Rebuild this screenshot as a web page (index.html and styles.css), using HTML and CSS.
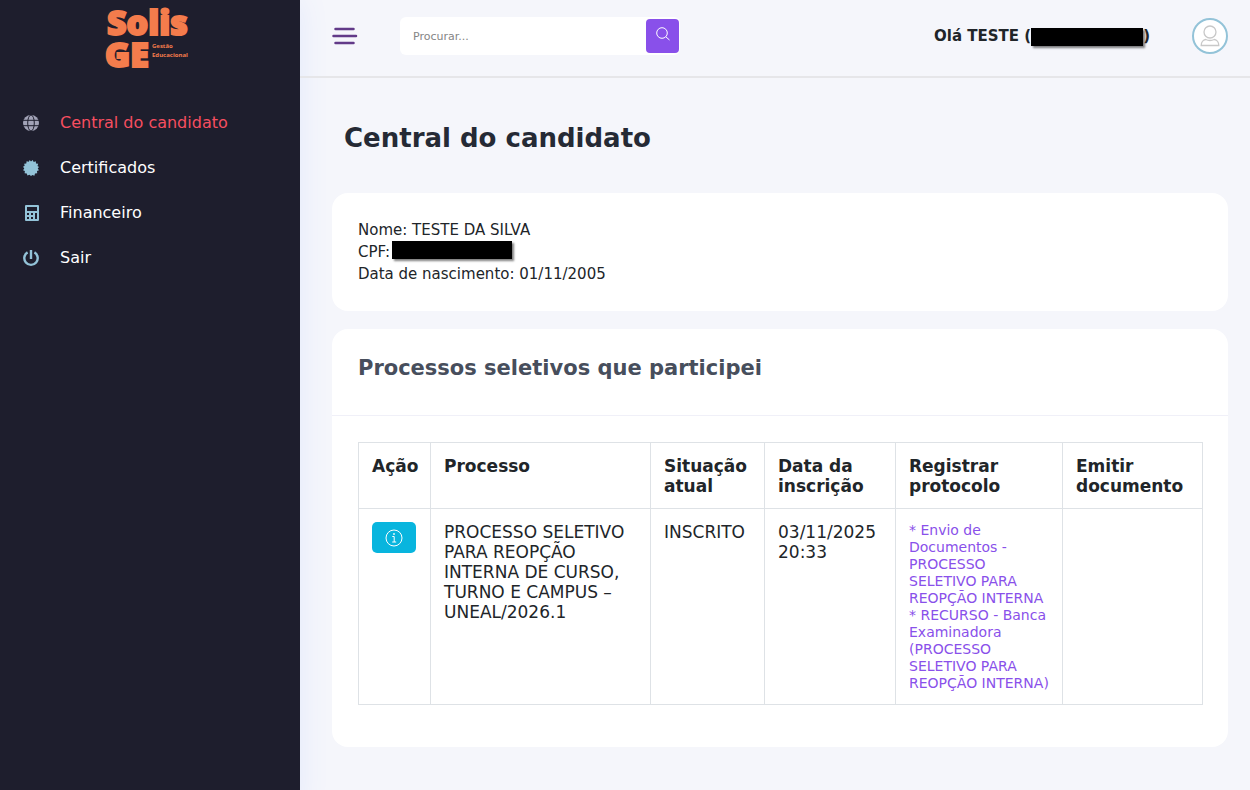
FILE: index.html
```
<!DOCTYPE html>
<html lang="pt-BR">

<head>
    <meta charset="UTF-8">
    <meta name="viewport" content="width=device-width, initial-scale=1.0">
    <title>Central do candidato - Solis GE</title>
    <link rel="stylesheet" href="styles.css">
</head>

<body>
<div class="wrapper">
    <!-- Sidebar -->
    <aside class="sidebar">
        <a href="#" class="logo">
            <svg width="90" height="64" viewBox="0 0 90 64" role="img" aria-label="Solis GE">
                <text class="logo-big" x="2" y="29">Solis</text>
                <text class="logo-big" x="0" y="61">GE</text>
                <text class="logo-small" x="47" y="42">Gestão</text>
                <text class="logo-small" x="47" y="51">Educacional</text>
            </svg>
        </a>

        <nav class="menu">
            <a href="#" class="menu-link active">
                <svg class="menu-icon" viewBox="0 0 16 16">
                    <circle cx="8" cy="8" r="8" fill="currentColor"/>
                    <g fill="none" stroke="#1e1e2d">
                        <ellipse cx="8" cy="8" rx="3.3" ry="8"/>
                        <path d="M0 5.3h16M0 10.7h16"/>
                    </g>
                </svg>
                <span>Central do candidato</span>
            </a>
            <a href="#" class="menu-link">
                <svg class="menu-icon" viewBox="0 0 16 16">
                    <path fill="currentColor" d="M8 1.5 9.7 0l1 2 2.1-.8.2 2.3 2.2.3-.7 2.1L16 7l-1.3 1.5L16 10.3l-2 .8.2 2.2-2.2.2-.6 2.2-2-.8L8 16l-1.5-1.2-2.1.8-.6-2.2-2.2-.2.3-2.2L0 10.2l1.3-1.7L0 6.8l1.7-1-.6-2.1 2.2-.3.3-2.2 2.2.6L6.7 0z"/>
                </svg>
                <span>Certificados</span>
            </a>
            <a href="#" class="menu-link">
                <svg class="menu-icon calc" viewBox="0 0 14 16">
                    <path fill="currentColor" fill-rule="evenodd" d="M1 0h12a1 1 0 0 1 1 1v14a1 1 0 0 1-1 1H1a1 1 0 0 1-1-1V1a1 1 0 0 1 1-1zM2 2v4h10V2zM2 8v2h2V8zM6 8v2h2V8zM10 8v6h2V8zM2 12v2h2v-2zM6 12v2h2v-2z"/>
                </svg>
                <span>Financeiro</span>
            </a>
            <a href="#" class="menu-link">
                <svg class="menu-icon" viewBox="0 0 16 16" fill="none" stroke="currentColor" stroke-width="2.4">
                    <path d="M4.6 2.4a6.7 6.7 0 1 0 6.8 0M8 0v9"/>
                </svg>
                <span>Sair</span>
            </a>
        </nav>
    </aside>

    <div class="page">
        <!-- Top bar -->
        <header class="topbar">
            <button type="button" class="toggle" aria-label="Abrir menu">
                <svg width="26" height="18" viewBox="0 0 26 18" stroke="#623a88" stroke-width="2.5" stroke-linecap="round">
                    <path d="M3.5 2h18M1.5 9h22.5M3.500 16h18"/>
                </svg>
            </button>

            <form class="search">
                <input type="text" name="q" placeholder="Procurar..." aria-label="Procurar">
                <button type="submit" aria-label="Buscar">
                    <svg width="14" height="14" viewBox="0 0 14 14" fill="none" stroke="#fff">
                        <circle cx="6" cy="6" r="5.3"/>
                        <path d="M9.8 9.8l3.700 3.2"/>
                    </svg>
                </button>
            </form>

            <div class="user">
                <strong>Olá TESTE (<span class="redacted redacted-user"></span>)</strong>
                <a href="#" class="avatar" aria-label="Perfil">
                    <svg width="20" height="22" viewBox="0 0 20 22" fill="none" stroke="#c8c8c8" stroke-width="1.3">
                        <circle cx="10" cy="7" r="6"/>
                        <path d="M1.2 20.5c0-3.200 2-5.700 4.500-6 2.500 1.200 6 1.200 8.600 0 2.500.3 4.500 2.800 4.500 6z"/>
                    </svg>
                </a>
            </div>
        </header>

        <main class="content">
            <h1>Central do candidato</h1>

            <!-- Candidate data -->
            <section class="card candidate">
                <div>Nome: TESTE DA SILVA</div>
                <div class="cpf">CPF:<span class="redacted redacted-cpf"></span></div>
                <div>Data de nascimento: 01/11/2005</div>
            </section>

            <!-- Processes -->
            <section class="card">
                <h2>Processos seletivos que participei</h2>
                <div class="card-body">
                    <table>
                        <colgroup>
                            <col class="col-action">
                            <col class="col-process">
                            <col class="col-status">
                            <col class="col-date">
                            <col class="col-protocol">
                            <col class="col-document">
                        </colgroup>
                        <thead>
                            <tr>
                                <th>Ação</th>
                                <th>Processo</th>
                                <th>Situação atual</th>
                                <th>Data da inscrição</th>
                                <th>Registrar protocolo</th>
                                <th>Emitir documento</th>
                            </tr>
                        </thead>
                        <tbody>
                            <tr>
                                <td>
                                    <button type="button" class="btn-info" aria-label="Detalhes">
                                        <svg width="18" height="18" viewBox="0 0 18 18" fill="none" stroke="#fff">
                                            <circle cx="9" cy="9" r="8"/>
                                            <path d="M7.3 7.500h1.900v5.500M7.200 13h4"/>
                                            <circle cx="9" cy="5" r=".5" fill="#fff"/>
                                        </svg>
                                    </button>
                                </td>
                                <td>PROCESSO SELETIVO PARA REOPÇÃO INTERNA DE CURSO, TURNO E CAMPUS – UNEAL/2026.1</td>
                                <td>INSCRITO</td>
                                <td>03/11/2025 20:33</td>
                                <td class="protocols">
                                    <a href="#">* Envio de Documentos - PROCESSO SELETIVO PARA REOPÇÃO INTERNA</a>
                                    <a href="#">* RECURSO - Banca Examinadora (PROCESSO SELETIVO PARA REOPÇÃO INTERNA)</a>
                                </td>
                                <td></td>
                            </tr>
                        </tbody>
                    </table>
                </div>
            </section>
        </main>
    </div>
</div>
</body>

</html>
```
FILE: styles.css
```
* {
    box-sizing: border-box;
}

body {
    font-family: "DejaVu Sans", sans-serif;
    font-size: 15px;
    line-height: 22px;
    background-color: #f5f6fb;
    margin: 0;
    color: #212529;
}

a {
    text-decoration: none;
}

button {
    border: none;
    padding: 0;
    cursor: pointer;
}

svg {
    display: block;
    overflow: visible;
}

.wrapper {
    display: flex;
    min-height: 100vh;
}

/* Sidebar */
.sidebar {
    flex: 0 0 300px;
    background-color: #1e1e2d;
    box-shadow: 0 0 28px rgba(82, 130, 255, 0.1);
}

.logo {
    display: flex;
    justify-content: center;
    padding: 6px 0;
}

.logo-big {
    font-family: "Noto Sans", sans-serif;
    font-size: 34px;
    font-weight: 900;
    fill: #f47c4c;
    stroke: #f47c4c;
    stroke-width: 2px;
}

.logo-small {
    font-family: "Open Sans", sans-serif;
    font-size: 6px;
    font-weight: 700;
    fill: #f47c4c;
}

.menu {
    display: flex;
    flex-direction: column;
    padding: 24px 23px;
}

.menu-link {
    display: flex;
    align-items: center;
    gap: 21px;
    height: 45px;
    font-size: 16px;
    color: #fff;
}

.menu-link.active {
    color: #f64e60;
}

.menu-icon {
    width: 16px;
    height: 16px;
    color: #93c3d8;
}

.menu-icon.calc {
    padding-left: 2px;
}

.active .menu-icon {
    color: #a2a3b7;
}

/* Top bar */
.page {
    flex: 1;
    min-width: 0;
}

.topbar {
    display: flex;
    align-items: center;
    height: 78px;
    padding: 0 22px 4px 32px;
    border-bottom: 2px solid #e6e6e9;
}

.toggle {
    background: none;
}

.search {
    display: flex;
    align-items: center;
    width: 280px;
    height: 38px;
    margin-left: 42px;
    padding-right: 1px;
    background-color: #fff;
    border-radius: 6px;
}

.search input {
    flex: 1;
    min-width: 0;
    padding: 0 13px;
    border: none;
    outline: none;
    background: none;
    font-family: inherit;
    font-size: 11px;
}

.search input::placeholder {
    color: #858585;
}

.search button {
    display: flex;
    align-items: center;
    justify-content: center;
    width: 33px;
    height: 34px;
    padding-bottom: 4px;
    background-color: #8950ea;
    border-radius: 4px;
}

.user {
    display: flex;
    align-items: center;
    gap: 42px;
    margin-left: auto;
}

.redacted {
    display: inline-block;
    height: 18px;
    vertical-align: middle;
    background-color: #000;
    box-shadow: 2px 2px 2px rgba(0, 0, 0, 0.5);
}

.redacted-user {
    width: 112px;
}

.redacted-cpf {
    width: 120px;
}

.avatar {
    display: flex;
    align-items: center;
    justify-content: center;
    width: 36px;
    height: 36px;
    background-color: #fff;
    border: 2px solid #93c3d8;
    border-radius: 50%;
}

/* Content */
.content {
    padding: 44px 22px 44px 32px;
}

h1 {
    margin: 0 12px 39px;
    font-size: 26px;
    line-height: 32px;
    color: #252a35;
}

.card {
    margin-bottom: 18px;
    background-color: #fff;
    border-radius: 16px;
}

.candidate {
    padding: 26px;
}

.cpf {
    display: flex;
    gap: 2px;
}

h2 {
    margin: 0;
    padding: 26px 26px 34px;
    border-bottom: 1px solid #f0f0f8;
    font-size: 21px;
    line-height: 26px;
    color: #474e5c;
}

.card-body {
    padding: 26px 26px 42px;
}

table {
    width: 100%;
    table-layout: fixed;
    border-collapse: collapse;
    font-size: 17px;
    line-height: 20px;
}

th,
td {
    padding: 13px 8px 12px 13px;
    border: 1px solid #dee2e6;
    text-align: left;
    vertical-align: top;
}

.col-action {
    width: 72px;
}

.col-process {
    width: 220px;
}

.col-status {
    width: 114px;
}

.col-date {
    width: 131px;
}

.col-protocol {
    width: 167px;
}

.col-document {
    width: 140px;
}

.btn-info {
    display: flex;
    align-items: center;
    justify-content: center;
    width: 44px;
    height: 31px;
    background-color: #08b5de;
    border-radius: 5px;
}

.protocols {
    font-size: 14px;
    line-height: 17px;
}

.protocols a {
    display: block;
    color: #8950ea;
}
```
